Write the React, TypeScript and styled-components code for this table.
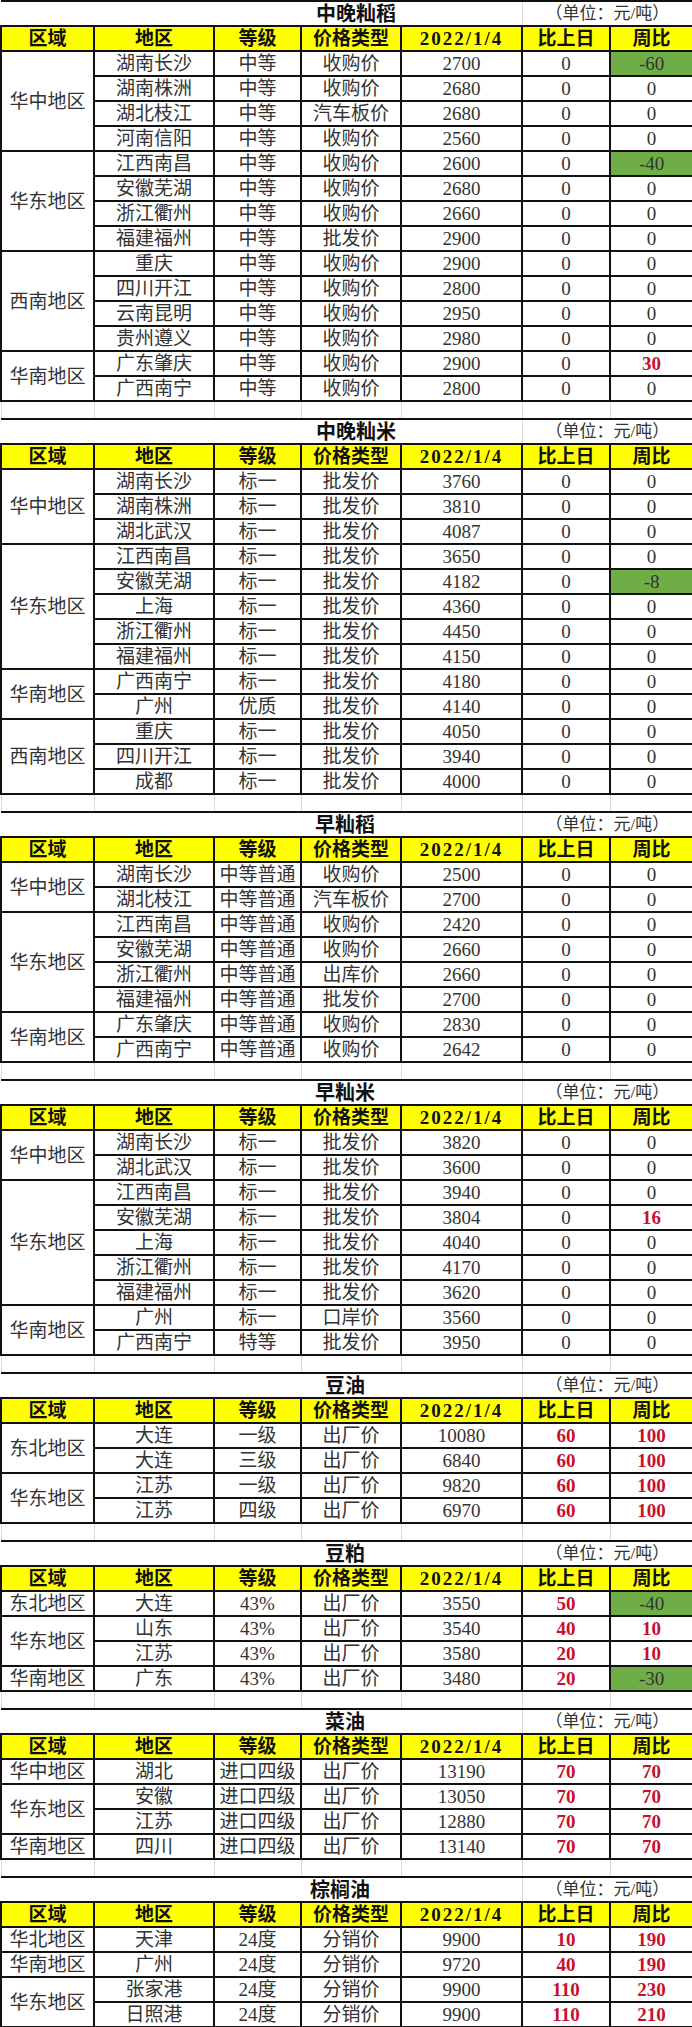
import React from "react";
import styled, { createGlobalStyle } from "styled-components";

const GlobalStyle = createGlobalStyle`
	body {
		margin: 0;
		background: #ffffff;
		font-family: "Liberation Serif", "Noto Sans CJK SC", serif;
		color: #2a2a2a;
	}
`;

type Row = [string, string, string, string, string, string];

interface Group {
	region: string;
	rows: Row[];
}

interface Section {
	title: string;
	titleLeft: number;
	groups: Group[];
}

const sections: Section[] = [
	{
		title: "中晚籼稻",
		titleLeft: 315,
		groups: [
			{
				region: "华中地区",
				rows: [
					["湖南长沙", "中等", "收购价", "2700", "0", "-60"],
					["湖南株洲", "中等", "收购价", "2680", "0", "0"],
					["湖北枝江", "中等", "汽车板价", "2680", "0", "0"],
					["河南信阳", "中等", "收购价", "2560", "0", "0"],
				],
			},
			{
				region: "华东地区",
				rows: [
					["江西南昌", "中等", "收购价", "2600", "0", "-40"],
					["安徽芜湖", "中等", "收购价", "2680", "0", "0"],
					["浙江衢州", "中等", "收购价", "2660", "0", "0"],
					["福建福州", "中等", "批发价", "2900", "0", "0"],
				],
			},
			{
				region: "西南地区",
				rows: [
					["重庆", "中等", "收购价", "2900", "0", "0"],
					["四川开江", "中等", "收购价", "2800", "0", "0"],
					["云南昆明", "中等", "收购价", "2950", "0", "0"],
					["贵州遵义", "中等", "收购价", "2980", "0", "0"],
				],
			},
			{
				region: "华南地区",
				rows: [
					["广东肇庆", "中等", "收购价", "2900", "0", "30"],
					["广西南宁", "中等", "收购价", "2800", "0", "0"],
				],
			},
		],
	},
	{
		title: "中晚籼米",
		titleLeft: 315,
		groups: [
			{
				region: "华中地区",
				rows: [
					["湖南长沙", "标一", "批发价", "3760", "0", "0"],
					["湖南株洲", "标一", "批发价", "3810", "0", "0"],
					["湖北武汉", "标一", "批发价", "4087", "0", "0"],
				],
			},
			{
				region: "华东地区",
				rows: [
					["江西南昌", "标一", "批发价", "3650", "0", "0"],
					["安徽芜湖", "标一", "批发价", "4182", "0", "-8"],
					["上海", "标一", "批发价", "4360", "0", "0"],
					["浙江衢州", "标一", "批发价", "4450", "0", "0"],
					["福建福州", "标一", "批发价", "4150", "0", "0"],
				],
			},
			{
				region: "华南地区",
				rows: [
					["广西南宁", "标一", "批发价", "4180", "0", "0"],
					["广州", "优质", "批发价", "4140", "0", "0"],
				],
			},
			{
				region: "西南地区",
				rows: [
					["重庆", "标一", "批发价", "4050", "0", "0"],
					["四川开江", "标一", "批发价", "3940", "0", "0"],
					["成都", "标一", "批发价", "4000", "0", "0"],
				],
			},
		],
	},
	{
		title: "早籼稻",
		titleLeft: 314,
		groups: [
			{
				region: "华中地区",
				rows: [
					["湖南长沙", "中等普通", "收购价", "2500", "0", "0"],
					["湖北枝江", "中等普通", "汽车板价", "2700", "0", "0"],
				],
			},
			{
				region: "华东地区",
				rows: [
					["江西南昌", "中等普通", "收购价", "2420", "0", "0"],
					["安徽芜湖", "中等普通", "收购价", "2660", "0", "0"],
					["浙江衢州", "中等普通", "出库价", "2660", "0", "0"],
					["福建福州", "中等普通", "批发价", "2700", "0", "0"],
				],
			},
			{
				region: "华南地区",
				rows: [
					["广东肇庆", "中等普通", "收购价", "2830", "0", "0"],
					["广西南宁", "中等普通", "收购价", "2642", "0", "0"],
				],
			},
		],
	},
	{
		title: "早籼米",
		titleLeft: 314,
		groups: [
			{
				region: "华中地区",
				rows: [
					["湖南长沙", "标一", "批发价", "3820", "0", "0"],
					["湖北武汉", "标一", "批发价", "3600", "0", "0"],
				],
			},
			{
				region: "华东地区",
				rows: [
					["江西南昌", "标一", "批发价", "3940", "0", "0"],
					["安徽芜湖", "标一", "批发价", "3804", "0", "16"],
					["上海", "标一", "批发价", "4040", "0", "0"],
					["浙江衢州", "标一", "批发价", "4170", "0", "0"],
					["福建福州", "标一", "批发价", "3620", "0", "0"],
				],
			},
			{
				region: "华南地区",
				rows: [
					["广州", "标一", "口岸价", "3560", "0", "0"],
					["广西南宁", "特等", "批发价", "3950", "0", "0"],
				],
			},
		],
	},
	{
		title: "豆油",
		titleLeft: 324,
		groups: [
			{
				region: "东北地区",
				rows: [
					["大连", "一级", "出厂价", "10080", "60", "100"],
					["大连", "三级", "出厂价", "6840", "60", "100"],
				],
			},
			{
				region: "华东地区",
				rows: [
					["江苏", "一级", "出厂价", "9820", "60", "100"],
					["江苏", "四级", "出厂价", "6970", "60", "100"],
				],
			},
		],
	},
	{
		title: "豆粕",
		titleLeft: 324,
		groups: [
			{
				region: "东北地区",
				rows: [["大连", "43%", "出厂价", "3550", "50", "-40"]],
			},
			{
				region: "华东地区",
				rows: [
					["山东", "43%", "出厂价", "3540", "40", "10"],
					["江苏", "43%", "出厂价", "3580", "20", "10"],
				],
			},
			{
				region: "华南地区",
				rows: [["广东", "43%", "出厂价", "3480", "20", "-30"]],
			},
		],
	},
	{
		title: "菜油",
		titleLeft: 324,
		groups: [
			{
				region: "华中地区",
				rows: [["湖北", "进口四级", "出厂价", "13190", "70", "70"]],
			},
			{
				region: "华东地区",
				rows: [
					["安徽", "进口四级", "出厂价", "13050", "70", "70"],
					["江苏", "进口四级", "出厂价", "12880", "70", "70"],
				],
			},
			{
				region: "华南地区",
				rows: [["四川", "进口四级", "出厂价", "13140", "70", "70"]],
			},
		],
	},
	{
		title: "棕榈油",
		titleLeft: 309,
		groups: [
			{
				region: "华北地区",
				rows: [["天津", "24度", "分销价", "9900", "10", "190"]],
			},
			{
				region: "华南地区",
				rows: [["广州", "24度", "分销价", "9720", "40", "190"]],
			},
			{
				region: "华东地区",
				rows: [
					["张家港", "24度", "分销价", "9900", "110", "230"],
					["日照港", "24度", "分销价", "9900", "110", "210"],
				],
			},
		],
	},
];

const colWidths = [93, 120, 87, 100, 121, 88, 83];
const headers = ["区域", "地区", "等级", "价格类型", "2022/1/4", "比上日", "周比"];

const Page = styled.div`
	width: 692px;
	overflow: hidden;
`;

const Sheet = styled.table`
	width: 692px;
	table-layout: fixed;
	border-collapse: collapse;
	border-spacing: 0;
	line-height: 1;
`;

const TitleRow = styled.tr`
	height: 25px;
`;

const TitleCell = styled.td<{ $left: number }>`
	padding: 0 0 0 ${(p) => p.$left}px;
	border-top: 2px solid #111;
	font-size: 20px;
	font-weight: 700;
	color: #111;
	white-space: nowrap;
	text-align: left;
	vertical-align: middle;
`;

const UnitCell = styled.td`
	padding: 0;
	border-top: 2px solid #111;
	border-left: 1px solid #d9d9d9;
	border-right: 2px solid #111;
	font-size: 17px;
	color: #333;
	text-align: center;
	white-space: nowrap;
	vertical-align: middle;
`;

const HeadRow = styled.tr`
	height: 25px;
	background: #ffff00;
`;

const HeadCell = styled.th<{ $spread?: boolean }>`
	padding: 0;
	border: 2px solid #111;
	font-size: 19px;
	font-weight: 700;
	color: #111;
	text-align: center;
	vertical-align: middle;
	white-space: nowrap;
	letter-spacing: ${(p) => (p.$spread ? "2px" : "0")};
`;

const DataRow = styled.tr`
	height: 25px;
`;

const Cell = styled.td<{ $tone?: "up" | "down" | "flat" }>`
	padding: 0;
	border: 2px solid #111;
	font-size: 19px;
	text-align: center;
	vertical-align: middle;
	white-space: nowrap;
	overflow: hidden;
	color: ${(p) => (p.$tone === "up" ? "#c8102e" : "#333")};
	font-weight: ${(p) => (p.$tone === "up" ? 700 : 400)};
	background: ${(p) => (p.$tone === "down" ? "#70ad47" : "transparent")};
`;

const GapRow = styled.tr`
	height: 17px;
`;

const GapCell = styled.td`
	padding: 0;
	border-left: 1px solid #d9d9d9;
	border-right: 1px solid #d9d9d9;
`;

const toneOf = (v: string): "up" | "down" | "flat" => {
	if (v.startsWith("-")) return "down";
	if (v === "0") return "flat";
	return "up";
};

const PriceTable = ({ section, last }: { section: Section; last: boolean }) => (
	<Sheet>
		<colgroup>
			{colWidths.map((w, i) => (
				<col key={i} style={{ width: w }} />
			))}
		</colgroup>
		<tbody>
			<TitleRow>
				<TitleCell colSpan={5} $left={section.titleLeft}>
					{section.title}
				</TitleCell>
				<UnitCell colSpan={2}>（单位：元/吨）</UnitCell>
			</TitleRow>
			<HeadRow>
				{headers.map((h) => (
					<HeadCell key={h} $spread={h.includes("/")}>
						{h}
					</HeadCell>
				))}
			</HeadRow>
			{section.groups.map((g) =>
				g.rows.map((r, i) => (
					<DataRow key={g.region + i}>
						{i === 0 && <Cell rowSpan={g.rows.length}>{g.region}</Cell>}
						<Cell>{r[0]}</Cell>
						<Cell>{r[1]}</Cell>
						<Cell>{r[2]}</Cell>
						<Cell>{r[3]}</Cell>
						<Cell $tone={toneOf(r[4])}>{r[4]}</Cell>
						<Cell $tone={toneOf(r[5])}>{r[5]}</Cell>
					</DataRow>
				))
			)}
			{!last && (
				<GapRow>
					{colWidths.map((_, i) => (
						<GapCell key={i} />
					))}
				</GapRow>
			)}
		</tbody>
	</Sheet>
);

const App = () => (
	<Page>
		<GlobalStyle />
		{sections.map((s, i) => (
			<PriceTable key={s.title} section={s} last={i === sections.length - 1} />
		))}
	</Page>
);

export default App;
